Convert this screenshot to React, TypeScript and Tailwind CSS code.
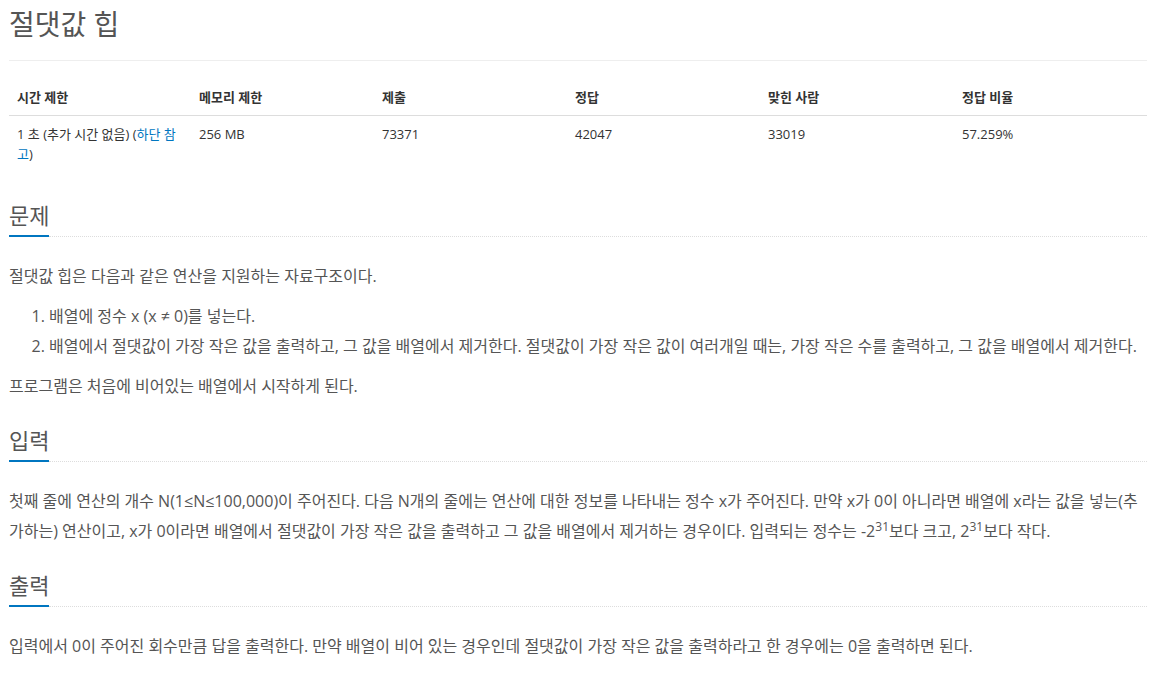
import React from "react";

function Heading({ title }: { title: string }) {
  return (
    <div className="flex items-end">
      <h2 className="text-[22px] leading-[30px] pb-[5px] border-b-2 border-[#0076c0] text-[#555]">
        {title}
      </h2>
      <div className="flex-1 border-b border-dotted border-[#ddd]" />
    </div>
  );
}

export default function App() {
  const heads = ["시간 제한", "메모리 제한", "제출", "정답", "맞힌 사람", "정답 비율"];
  return (
    <div
      className="bg-white min-h-[677px] pl-[9px] pr-[8px] text-[#555]"
      style={{ fontFamily: "'Open Sans', 'Noto Sans CJK KR', sans-serif" }}
    >
      <h1 className="pt-[4px] text-[28px] leading-[40px] text-[#555]">절댓값 힙</h1>
      <div className="mt-[16px] border-t border-[#eee]" />

      <table className="mt-[19px] mb-[28px] w-full table-fixed border-collapse text-[13px] leading-[19px] text-[#333]">
        <colgroup>
          <col className="w-[182px]" />
          <col className="w-[183px]" />
          <col className="w-[193px]" />
          <col className="w-[193px]" />
          <col className="w-[194px]" />
          <col />
        </colgroup>
        <thead>
          <tr className="border-b border-[#ddd]">
            {heads.map((h) => (
              <th key={h} className="px-[8px] py-[8px] text-left font-bold">
                {h}
              </th>
            ))}
          </tr>
        </thead>
        <tbody>
          <tr className="align-top leading-[20px]">
            <td className="px-[8px] py-[8px]">
              1 초 (추가 시간 없음) (<span className="text-[#0076c0]">하단 참고</span>)
            </td>
            <td className="px-[8px] py-[8px]">256 MB</td>
            <td className="px-[8px] py-[8px]">73371</td>
            <td className="px-[8px] py-[8px]">42047</td>
            <td className="px-[8px] py-[8px]">33019</td>
            <td className="px-[8px] py-[8px]">57.259%</td>
          </tr>
        </tbody>
      </table>

      <section className="text-[16px] leading-[30px]">
        <Heading title="문제" />
        <div className="mt-[24px]">
          <p className="mb-[10px]">절댓값 힙은 다음과 같은 연산을 지원하는 자료구조이다.</p>
          <ol className="list-decimal pl-[40px] mb-[10px]">
            <li>배열에 정수 x (x ≠ 0)를 넣는다.</li>
            <li>
              배열에서 절댓값이 가장 작은 값을 출력하고, 그 값을 배열에서 제거한다. 절댓값이 가장 작은 값이 여러개일 때는, 가장 작은 수를 출력하고, 그 값을 배열에서 제거한다.
            </li>
          </ol>
          <p className="mb-[10px]">프로그램은 처음에 비어있는 배열에서 시작하게 된다.</p>
        </div>
      </section>

      <section className="mt-[24px] text-[16px] leading-[30px]">
        <Heading title="입력" />
        <div className="mt-[24px]">
          <p className="mb-[10px]">
            첫째 줄에 연산의 개수 N(1≤N≤100,000)이 주어진다. 다음 N개의 줄에는 연산에 대한 정보를 나타내는 정수 x가 주어진다. 만약 x가 0이 아니라면 배열에 x라는 값을 넣는(추가하는) 연산이고, x가 0이라면 배열에서 절댓값이 가장 작은 값을 출력하고 그 값을 배열에서 제거하는 경우이다. 입력되는 정수는 -2<sup>31</sup>보다 크고, 2<sup>31</sup>보다 작다.
          </p>
        </div>
      </section>

      <section className="mt-[24px] text-[16px] leading-[30px]">
        <Heading title="출력" />
        <div className="mt-[24px]">
          <p className="mb-[10px]">
            입력에서 0이 주어진 회수만큼 답을 출력한다. 만약 배열이 비어 있는 경우인데 절댓값이 가장 작은 값을 출력하라고 한 경우에는 0을 출력하면 된다.
          </p>
        </div>
      </section>
    </div>
  );
}
